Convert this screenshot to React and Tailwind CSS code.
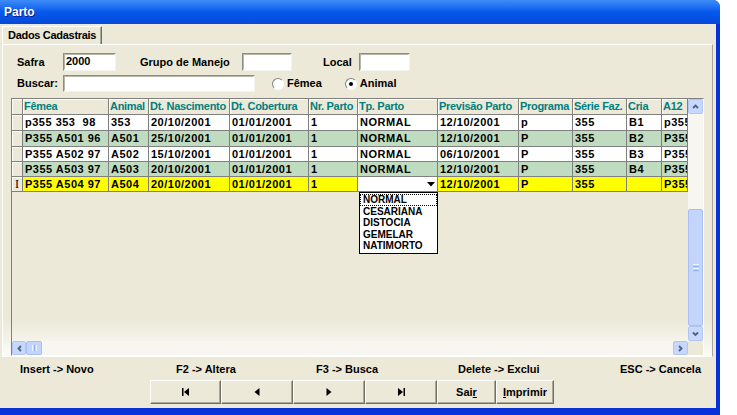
import React from 'react';

const columns = [
  { key: 'femea', label: 'Fêmea', w: 'w-[86px]' },
  { key: 'animal', label: 'Animal', w: 'w-[40px]' },
  { key: 'nasc', label: 'Dt. Nascimento', w: 'w-[81px]' },
  { key: 'cob', label: 'Dt. Cobertura', w: 'w-[79px]' },
  { key: 'nr', label: 'Nr. Parto', w: 'w-[49px]' },
  { key: 'tp', label: 'Tp. Parto', w: 'w-[80px]' },
  { key: 'prev', label: 'Previsão Parto', w: 'w-[81px]' },
  { key: 'prog', label: 'Programa', w: 'w-[54px]' },
  { key: 'serie', label: 'Série Faz.', w: 'w-[54px]' },
  { key: 'cria', label: 'Cria', w: 'w-[35px]' },
  { key: 'a12', label: 'A12', w: 'w-[26px]' },
];

const rows = [
  { bg: 'bg-white', h: 'h-[16px]', femea: 'p355 353  98', animal: '353', nasc: '20/10/2001', cob: '01/01/2001', nr: '1', tp: 'NORMAL', prev: '12/10/2001', prog: 'p', serie: '355', cria: 'B1', a12: 'p355' },
  { bg: 'bg-[#C0DCC0]', h: 'h-[16px]', femea: 'P355 A501 96', animal: 'A501', nasc: '25/10/2001', cob: '01/01/2001', nr: '1', tp: 'NORMAL', prev: '12/10/2001', prog: 'P', serie: '355', cria: 'B2', a12: 'P355' },
  { bg: 'bg-white', h: 'h-[15px]', femea: 'P355 A502 97', animal: 'A502', nasc: '15/10/2001', cob: '01/01/2001', nr: '1', tp: 'NORMAL', prev: '06/10/2001', prog: 'P', serie: '355', cria: 'B3', a12: 'P355' },
  { bg: 'bg-[#C0DCC0]', h: 'h-[15px]', femea: 'P355 A503 97', animal: 'A503', nasc: '20/10/2001', cob: '01/01/2001', nr: '1', tp: 'NORMAL', prev: '12/10/2001', prog: 'P', serie: '355', cria: 'B4', a12: 'P355' },
  { bg: 'bg-[#FFFF00]', h: 'h-[15px]', femea: 'P355 A504 97', animal: 'A504', nasc: '20/10/2001', cob: '01/01/2001', nr: '1', tp: '', prev: '12/10/2001', prog: 'P', serie: '355', cria: '', a12: 'P355', editing: true },
];

const tipos = ['NORMAL', 'CESARIANA', 'DISTOCIA', 'GEMELAR', 'NATIMORTO'];

const Chevron = ({ dir }) => {
  const pts = {
    up: '2,6 4.5,3.5 7,6',
    down: '2,3.5 4.5,6 7,3.5',
    left: '6,2 3.5,4.5 6,7',
    right: '3,2 5.5,4.5 3,7',
  }[dir];
  return (
    <svg width="9" height="9" viewBox="0 0 9 9">
      <polyline points={pts} fill="none" stroke="#4D6185" strokeWidth="1.8" />
    </svg>
  );
};

const ScrollBtn = ({ dir, className = '' }) => (
  <div className={`flex items-center justify-center rounded-[2px] border border-[#B2C6F4] bg-[#C8D8FC] ${className}`}>
    <Chevron dir={dir} />
  </div>
);

const TextBox = ({ className, value }) => (
  <div className={`border border-t-[#8E8C86] border-l-[#8E8C86] border-b-[#F4F3EE] border-r-[#F4F3EE] bg-white ${className}`}>
    <div className="h-full border border-t-[#B8B5A9] border-l-[#B8B5A9] border-b-white border-r-white pl-[1px] text-[11px] leading-[13px] text-black">
      {value}
    </div>
  </div>
);

const Radio = ({ checked }) => (
  <div className="flex h-[12px] w-[12px] items-center justify-center rounded-full border border-t-[#808080] border-l-[#808080] border-b-white border-r-white bg-white">
    {checked && <div className="h-[4px] w-[4px] rounded-full bg-black" />}
  </div>
);

const NavGlyph = ({ kind }) => (
  <svg width="10" height="8" viewBox="0 0 10 8">
    {kind === 'first' && (
      <>
        <rect x="1" y="0" width="1.5" height="8" fill="#000" />
        <polygon points="8,0 3,4 8,8" fill="#000" />
      </>
    )}
    {kind === 'prior' && <polygon points="7.5,0 2.5,4 7.5,8" fill="#000" />}
    {kind === 'next' && <polygon points="2.5,0 7.5,4 2.5,8" fill="#000" />}
    {kind === 'last' && (
      <>
        <polygon points="2,0 7,4 2,8" fill="#000" />
        <rect x="7.5" y="0" width="1.5" height="8" fill="#000" />
      </>
    )}
  </svg>
);

const Btn = ({ w, children }) => (
  <div className={`flex h-[24px] ${w} items-center justify-center border border-t-white border-l-white border-b-[#716F64] border-r-[#716F64] bg-[#ECE9D8] text-[11px] font-bold text-black shadow-[inset_-1px_-1px_0_#ACA899]`}>
    {children}
  </div>
);

export default function App() {
  return (
    <div className="flex h-[415px] w-[737px] overflow-hidden bg-white font-['Liberation_Sans',Arial,sans-serif]">
      <div className="flex h-full w-[720px] flex-col rounded-tr-[7px] bg-[#0831D9] pr-[4px]">
        {/* title bar */}
        <div className="flex h-[24px] items-center rounded-tr-[7px] bg-linear-to-b from-[#3D8CF7] via-[#0758EC] to-[#0449DA] pl-[4px] -mr-[4px]">
          <span className="text-[12px] font-bold text-white [text-shadow:1px_1px_0_#0A1E8C]">Parto</span>
        </div>

        <div className="flex h-[384px] flex-col bg-[#ECE9D8] pt-[2px]">
          {/* tab */}
          <div className="flex pl-[2px]">
            <div className="flex h-[18px] w-[100px] items-center border-l border-t border-r border-l-white border-t-white border-r-[#716F64] bg-[#ECE9D8] pl-[5px] text-[11px] font-bold tracking-[-0.3px] text-black shadow-[inset_-1px_0_0_#ACA899]">
              Dados Cadastrais
            </div>
          </div>

          {/* tab panel */}
          <div className="ml-[2px] mr-[3px] flex h-[313px] flex-col border border-t-white border-l-white border-b-white border-r-[#ACA899] bg-linear-to-b from-[#ECE9D8] from-88% to-[#FBFBF8] pl-[8px] pt-[8px]">
            <div className="flex h-[18px] items-center text-[11px] font-bold text-black">
              <span className="ml-[6px] w-[46px]">Safra</span>
              <TextBox className="h-[18px] w-[53px]" value="2000" />
              <span className="ml-[24px] w-[102px]">Grupo de Manejo</span>
              <TextBox className="h-[18px] w-[50px]" />
              <span className="ml-[31px] w-[36px]">Local</span>
              <TextBox className="h-[18px] w-[51px]" />
            </div>
            <div className="mt-[4px] flex h-[17px] items-center text-[11px] font-bold text-black">
              <span className="ml-[6px] w-[46px]">Buscar:</span>
              <TextBox className="h-[17px] w-[192px]" />
              <div className="ml-[17px] flex items-center gap-[3px]">
                <Radio />
                <span>Fêmea</span>
              </div>
              <div className="ml-[23px] flex items-center gap-[3px]">
                <Radio checked />
                <span>Animal</span>
              </div>
            </div>

            {/* grid */}
            <div className="mt-[6px] flex h-[258px] w-[693px] flex-col border border-t-[#808080] border-l-[#808080] border-b-white border-r-white">
              <div className="flex flex-1">
                <div className="relative w-[676px] text-[11px] font-bold">
                  {/* header */}
                  <div className="flex h-[16px]">
                    <div className="w-[11px] border-b border-r border-[#808080] bg-[#ECE9D8] shadow-[inset_1px_1px_0_#fff]" />
                    {columns.map((c) => (
                      <div
                        key={c.key}
                        className={`${c.w} flex items-center overflow-hidden whitespace-nowrap border-b border-r border-[#808080] bg-[#ECE9D8] pl-[1px] tracking-[-0.3px] text-[#008080] shadow-[inset_1px_1px_0_#fff]`}
                      >
                        {c.label}
                      </div>
                    ))}
                  </div>
                  {/* rows */}
                  {rows.map((r, i) => (
                    <div key={i} className={`flex ${r.h}`}>
                      <div className="flex w-[11px] items-center justify-center border-b border-r border-[#808080] bg-[#ECE9D8] shadow-[inset_1px_1px_0_#fff]">
                        {r.editing ? (
                          <span className="font-['Liberation_Serif',serif] text-[12px] font-normal leading-none">I</span>
                        ) : null}
                      </div>
                      {columns.map((c) =>
                        r.editing && c.key === 'tp' ? (
                          <div key={c.key} className={`${c.w} flex items-center justify-end border-b border-r border-[#808080] bg-white pr-[2px]`}>
                            <svg width="8" height="5" viewBox="0 0 8 5">
                              <polygon points="0,0 8,0 4,4.5" fill="#000" />
                            </svg>
                          </div>
                        ) : (
                          <div
                            key={c.key}
                            className={`${c.w} ${r.bg} flex items-center overflow-hidden whitespace-pre border-b border-r border-[#808080] pl-[2px] tracking-[0.5px] text-black`}
                          >
                            {r[c.key]}
                          </div>
                        )
                      )}
                    </div>
                  ))}

                  {/* dropdown list */}
                  <div className="absolute left-[347px] top-[93px] w-[79px] border border-black bg-white py-[1px] text-[10px] font-bold leading-[11.5px] text-black">
                    {tipos.map((t, i) => (
                      <div
                        key={t}
                        className={`pl-[3px] ${i === 0 ? 'outline outline-1 -outline-offset-1 outline-dotted outline-black' : ''}`}
                      >
                        {t}
                      </div>
                    ))}
                  </div>
                </div>

                {/* vertical scrollbar */}
                <div className="flex w-[15px] flex-col bg-[#F7F6F1]">
                  <ScrollBtn dir="up" className="h-[15px]" />
                  <div className="flex-1" />
                  <div className="flex h-[117px] flex-col items-center justify-center gap-[1px] rounded-[2px] border border-[#A8BEF5] bg-[#C4D5FC]">
                    <div className="h-[1px] w-[6px] bg-[#EEF4FE]" />
                    <div className="h-[1px] w-[6px] bg-[#8CB0F8]" />
                    <div className="h-[1px] w-[6px] bg-[#EEF4FE]" />
                    <div className="h-[1px] w-[6px] bg-[#8CB0F8]" />
                  </div>
                  <ScrollBtn dir="down" className="h-[15px]" />
                </div>
              </div>

              {/* horizontal scrollbar */}
              <div className="flex h-[14px]">
                <div className="flex w-[676px] bg-[#F7F6F1]">
                  <ScrollBtn dir="left" className="w-[14px]" />
                  <div className="flex w-[16px] items-center justify-center gap-[1px] rounded-[2px] border border-[#A8BEF5] bg-[#C4D5FC]">
                    <div className="h-[6px] w-[1px] bg-[#EEF4FE]" />
                    <div className="h-[6px] w-[1px] bg-[#8CB0F8]" />
                    <div className="h-[6px] w-[1px] bg-[#EEF4FE]" />
                  </div>
                  <div className="flex-1" />
                  <ScrollBtn dir="right" className="w-[15px]" />
                </div>
                <div className="w-[15px] bg-[#ECE9D8]" />
              </div>
            </div>
          </div>

          {/* shortcut hints */}
          <div className="mt-[5px] flex h-[14px] items-center text-[11px] font-bold text-black">
            <span className="ml-[20px] w-[156px]">Insert -&gt; Novo</span>
            <span className="w-[140px]">F2 -&gt; Altera</span>
            <span className="w-[142px]">F3 -&gt; Busca</span>
            <span className="w-[162px]">Delete -&gt; Exclui</span>
            <span>ESC -&gt; Cancela</span>
          </div>

          {/* navigator buttons */}
          <div className="mt-[4px] flex pl-[150px]">
            <Btn w="w-[71px]"><NavGlyph kind="first" /></Btn>
            <Btn w="w-[72px]"><NavGlyph kind="prior" /></Btn>
            <Btn w="w-[72px]"><NavGlyph kind="next" /></Btn>
            <Btn w="w-[72px]"><NavGlyph kind="last" /></Btn>
            <Btn w="w-[59px]">
              <span>Sai<span className="underline">r</span></span>
            </Btn>
            <Btn w="w-[58px]">
              <span><span className="underline">I</span>mprimir</span>
            </Btn>
          </div>
        </div>
      </div>
    </div>
  );
}
